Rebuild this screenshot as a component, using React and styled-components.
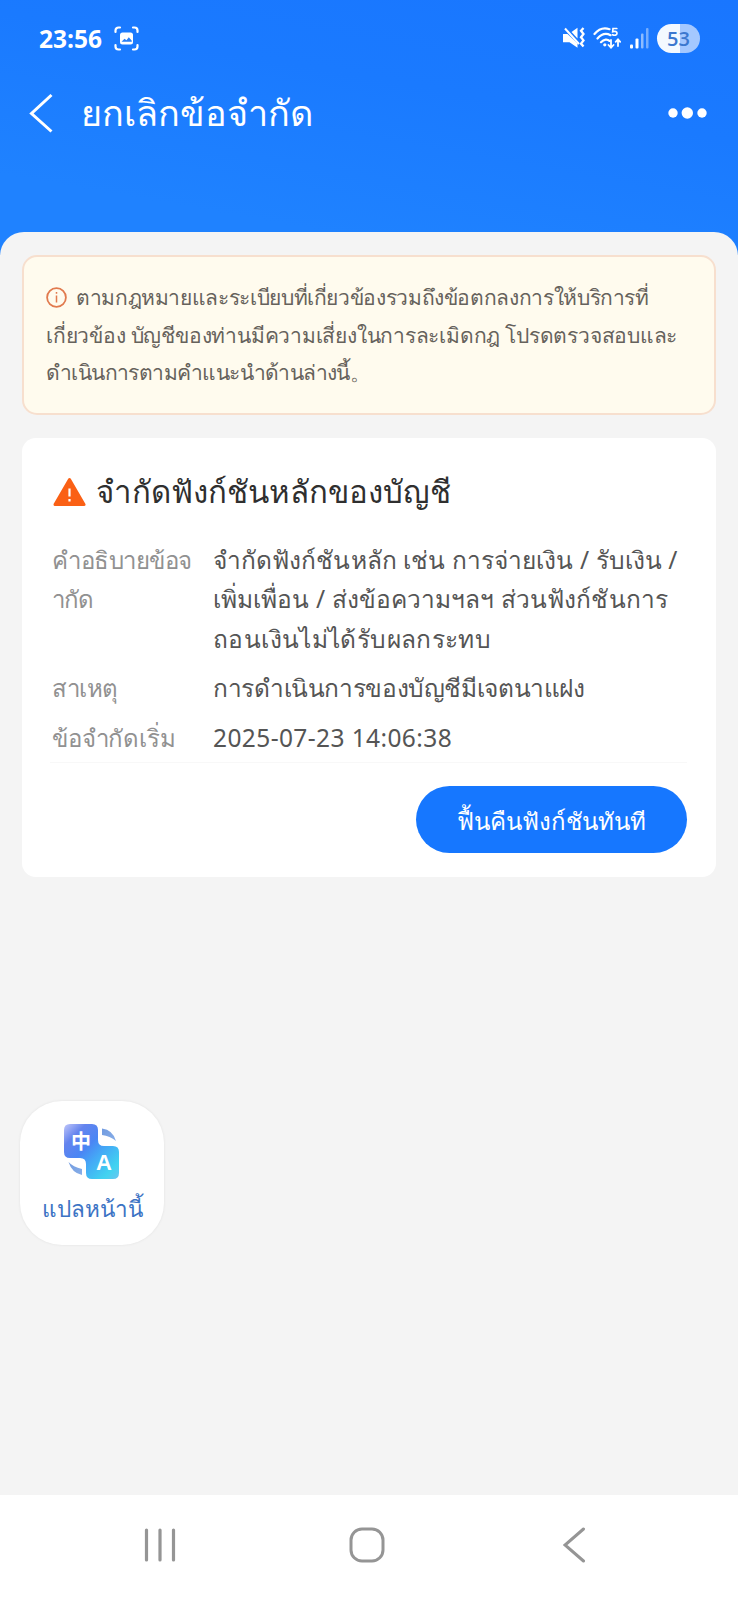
import React from "react";
import styled, { createGlobalStyle } from "styled-components";

const Global = createGlobalStyle`
  * { box-sizing: border-box; }
  body { margin: 0; background: #f4f4f4; font-family: "Noto Sans", "Open Sans", sans-serif; }
`;

const Screen = styled.div`
  width: 738px;
  height: 1600px;
  display: flex;
  flex-direction: column;
  overflow: hidden;
  background: linear-gradient(190deg, #1976ff 0, #1a7aff 140px, #1f82ff 300px);
`;

const Line = styled.span`
  display: block;
  white-space: nowrap;
  letter-spacing: ${(p) => p.$track || 0}px;
`;

const StatusBar = styled.div`
  display: flex;
  align-items: center;
  justify-content: space-between;
  height: 76px;
  padding: 0 38px 0 39px;
  color: #fff;
`;
const StatusGroup = styled.div`
  display: flex;
  align-items: center;
  gap: ${(p) => p.$gap}px;
`;
const Clock = styled.span`
  font: 700 24.5px "Open Sans", sans-serif;
`;
const Battery = styled.span`
  width: 43px;
  height: 29px;
  border-radius: 15px;
  background: linear-gradient(90deg, #f4f9ff 0 23px, #a4c8ff 23px);
  color: #3c78cf;
  font: 600 20px/29px "Open Sans", sans-serif;
  text-align: center;
`;

const TitleBar = styled.header`
  display: flex;
  align-items: center;
  height: 156px;
  padding: 0 31px 82px 29px;
  color: #fff;
`;
const Title = styled.h1`
  flex: 1;
  margin: 0 0 0 28px;
  font-size: 36px;
  font-weight: 400;
  line-height: 60px;
`;

const Sheet = styled.main`
  flex: 1;
  display: flex;
  flex-direction: column;
  align-items: flex-start;
  padding: 23px 22px 0;
  border-radius: 24px 24px 0 0;
  background: #f4f4f4;
`;
const Notice = styled.section`
  width: 694px;
  height: 160px;
  padding: 22px 22px;
  border: 2px solid #f7dfce;
  border-radius: 15px;
  background: #fffbee;
  color: #66625c;
  font-size: 21px;
  line-height: 37.5px;
`;
const NoticeLead = styled.div`
  display: flex;
  align-items: center;
  gap: 9px;
`;

const Card = styled.section`
  width: 694px;
  height: 439px;
  margin-top: 23px;
  padding: 29px 29px 24px 30px;
  border-radius: 14px;
  background: #fff;
  display: flex;
  flex-direction: column;
`;
const CardHead = styled.div`
  display: flex;
  align-items: center;
  gap: 10px;
  height: 50px;
  color: #2f2f2f;
  font-size: 31.2px;
`;
const Details = styled.dl`
  display: grid;
  grid-template-columns: 161px 1fr;
  row-gap: 10.5px;
  margin: 23px 0 0;
  line-height: 39.3px;
`;
const Label = styled.dt`
  color: #919191;
  font-size: 24px;
`;
const Value = styled.dd`
  margin: 0;
  color: #555;
  font-size: 24.5px;
`;
const CardFoot = styled.div`
  display: flex;
  justify-content: flex-end;
  margin: auto 0 0 -2px;
  padding-top: 23px;
  border-top: 1px solid #f8f8f8;
`;
const Action = styled.button`
  display: flex;
  align-items: center;
  justify-content: center;
  width: 271px;
  height: 67px;
  padding: 3px 0 0;
  border: 0;
  border-radius: 34px;
  background: #1677ff;
  color: #fff;
  font: 500 24px "Noto Sans", sans-serif;
`;

const Translate = styled.button`
  display: flex;
  flex-direction: column;
  align-items: center;
  gap: 11px;
  width: 144px;
  height: 144px;
  margin: 224px 0 0 -2px;
  padding: 23px 0 0;
  border: 0;
  border-radius: 42px;
  background: #fff;
  box-shadow: 0 0 3px rgba(0, 0, 0, 0.08);
  color: #3c73c4;
  font: 400 22.5px "Noto Sans", sans-serif;
`;

const NavBar = styled.nav`
  display: flex;
  align-items: center;
  justify-content: space-between;
  height: 105px;
  padding: 0 152px 5px 144px;
  background: #fff;
`;
const HomeKey = styled.span`
  display: flex;
  margin-right: 5px;
`;

const CaptureIcon = () => (
  <svg width="25" height="25" viewBox="0 0 25 25" fill="none" stroke="#fff" strokeWidth="2.2" strokeLinecap="round">
    <path d="M1.500 6V4.500a3 3 0 0 1 3-3H6M19 1.500h1.500a3 3 0 0 1 3 3V6M23.500 19v1.500a3 3 0 0 1-3 3H19M6 23.500H4.500a3 3 0 0 1-3-3V19" />
    <rect x="6" y="6.500" width="13" height="12" rx="2.500" fill="#fff" stroke="none" />
    <path d="M7.500 15.800l3-3 2 1.500 2.300-3 3 3.500v1z" fill="#2a7ff5" stroke="none" />
  </svg>
);
const MuteIcon = () => (
  <svg width="22" height="22" viewBox="0 0 22 22" fill="#fff" stroke="#fff">
    <path d="M8.500 5L14.500.8V11.500z" stroke="none" />
    <path d="M0 7h4.500L14.500 16.500v4.300L6.500 15.300H0z" stroke="none" />
    <path d="M2 1.500L16 17" strokeWidth="2" />
    <path d="M20.500 1l-2.500 2.800 2.500 3.200-2.500 3.200 2.500 3.200-2.500 3.200 2.500 2.900" strokeWidth="2.300" fill="none" />
  </svg>
);
const WifiIcon = () => (
  <svg width="28" height="22" viewBox="0 0 28 22" fill="none" stroke="#fff" strokeLinecap="round">
    <path d="M1.500 7C6 1.500 12 .7 16.500 2.200M4.500 11.500C8.500 7 13.500 6 17.500 8.200M8 15.200c3-3.200 6.500-3.200 8.500-1.300" strokeWidth="2.200" />
    <circle cx="11.800" cy="17.800" r="1.600" fill="#fff" stroke="none" />
    <path d="M23.800 1.500h-3.800l-.3 3.300c2.800-1 4.300 0 4.300 1.500 0 2-2.500 2.400-4.500 1.400" strokeWidth="1.700" />
    <path d="M18 13v7.500m-2.500-2.500l2.500 2.700 2.500-2.700M25 19v-6.500m-2.300 2.300L25 12.300l2.200 2.500" strokeWidth="1.800" />
  </svg>
);
const SignalIcon = () => (
  <svg width="19" height="21" viewBox="0 0 19 21" fill="#fff">
    <rect x="0" y="16.500" width="3" height="4" rx="1" />
    <rect x="5.500" y="10.500" width="3" height="10" rx="1" />
    <rect x="11" y="5.500" width="2.500" height="15" rx="1" opacity=".5" />
    <rect x="16" y="0" width="2.500" height="20.500" rx="1" opacity=".4" />
  </svg>
);
const BackIcon = () => (
  <svg width="24" height="40" viewBox="0 0 24 40" fill="none" stroke="#fff" strokeWidth="3">
    <path d="M22.500 2L2.500 20.500 22.500 38.500" />
  </svg>
);
const MoreIcon = () => (
  <svg width="40" height="14" viewBox="0 0 40 14" fill="#fff">
    <circle cx="6" cy="7" r="4.700" />
    <circle cx="20.300" cy="7" r="5.700" />
    <circle cx="35" cy="7" r="4.700" />
  </svg>
);
const InfoIcon = () => (
  <svg width="21" height="21" viewBox="0 0 21 21" fill="none" stroke="#e17a4e">
    <circle cx="10.500" cy="10.500" r="9.400" strokeWidth="1.800" />
    <path d="M10.500 8.500v7M10.500 5v1.800" strokeWidth="1.500" />
  </svg>
);
const WarnIcon = () => (
  <svg width="34" height="30" viewBox="0 0 34 30">
    <path d="M17.500 2.500L32 27.500H3z" fill="#fa6015" stroke="#fa6015" strokeWidth="3" strokeLinejoin="round" />
    <path d="M17.500 11.500v8M17.500 22v2.500" stroke="#fff" strokeWidth="2.200" />
  </svg>
);
const TranslateIcon = () => (
  <svg width="56" height="56" viewBox="0 0 56 56" fill="none">
    <defs>
      <linearGradient id="tiles" x1="0" y1="0" x2="1" y2="1">
        <stop offset="0" stopColor="#c0c6fa" />
        <stop offset=".2" stopColor="#6484ee" />
        <stop offset=".42" stopColor="#4a86f4" />
        <stop offset=".6" stopColor="#44aaf6" />
        <stop offset=".85" stopColor="#41d3f0" />
        <stop offset="1" stopColor="#6cc4f0" />
      </linearGradient>
      <linearGradient id="arcs" x1="0" y1="0" x2="1" y2="1">
        <stop offset="0" stopColor="#5684d8" />
        <stop offset="1" stopColor="#a4c6f0" />
      </linearGradient>
    </defs>
    <path d="M6 0h22q6 0 6 6v10q0 6 6 6h9q6 0 6 6v21q0 6-6 6H28q-6 0-6-6v-9q0-6-6-6H6q-6 0-6-6V6q0-6 6-6z" fill="url(#tiles)" />
    <path d="M38 4.500Q49 6 52 17q-6-5-14-6zM4.500 38Q9 43 18 45v6Q8 49 4.500 38z" fill="url(#arcs)" />
    <text x="17" y="24.500" fill="#fff" fontFamily="'Noto Sans CJK SC', sans-serif" fontWeight="700" fontSize="20" textAnchor="middle">中</text>
    <text x="40" y="46" fill="#fff" fontFamily="'Liberation Sans', sans-serif" fontWeight="700" fontSize="22" textAnchor="middle">A</text>
  </svg>
);
const RecentsIcon = () => (
  <svg width="32" height="34" viewBox="0 0 32 34" stroke="#959595" strokeWidth="3.200" strokeLinecap="round">
    <path d="M2.500 2v30M16 2v30M29.500 2v30" />
  </svg>
);
const HomeIcon = () => (
  <svg width="36" height="36" viewBox="0 0 36 36" fill="none" stroke="#959595" strokeWidth="3">
    <rect x="2" y="2" width="32" height="32" rx="11" />
  </svg>
);
const NavBackIcon = () => (
  <svg width="23" height="36" viewBox="0 0 23 36" fill="none" stroke="#959595" strokeWidth="3" strokeLinecap="round">
    <path d="M20.500 2L2 18l18.500 16" />
  </svg>
);

export default function App() {
  return (
    <>
      <Global />
      <Screen>
        <StatusBar>
          <StatusGroup $gap={12}><Clock>23:56</Clock><CaptureIcon /></StatusGroup>
          <StatusGroup $gap={8.5}><MuteIcon /><WifiIcon /><SignalIcon /><Battery>53</Battery></StatusGroup>
        </StatusBar>
        <TitleBar>
          <BackIcon />
          <Title><Line>ยกเลิกข้อจำกัด</Line></Title>
          <MoreIcon />
        </TitleBar>
        <Sheet>
          <Notice>
            <NoticeLead>
              <InfoIcon />
              <Line $track={-0.36}>ตามกฎหมายและระเบียบที่เกี่ยวข้องรวมถึงข้อตกลงการให้บริการที่</Line>
            </NoticeLead>
            <Line $track={-0.22}>เกี่ยวข้อง บัญชีของท่านมีความเสี่ยงในการละเมิดกฎ โปรดตรวจสอบและ</Line>
            <Line $track={-0.6}>ดำเนินการตามคำแนะนำด้านล่างนี้。</Line>
          </Notice>
          <Card>
            <CardHead><WarnIcon /><Line>จำกัดฟังก์ชันหลักของบัญชี</Line></CardHead>
            <Details>
              <Label>
                <Line $track={-0.5}>คำอธิบายข้อจ</Line>
                <Line $track={-0.8}>ากัด</Line>
              </Label>
              <Value>
                <Line $track={0.07}>จำกัดฟังก์ชันหลัก เช่น การจ่ายเงิน / รับเงิน /</Line>
                <Line $track={0.08}>เพิ่มเพื่อน / ส่งข้อความฯลฯ ส่วนฟังก์ชันการ</Line>
                <Line $track={0.38}>ถอนเงินไม่ได้รับผลกระทบ</Line>
              </Value>
              <Label><Line $track={-0.4}>สาเหตุ</Line></Label>
              <Value><Line $track={-0.37}>การดำเนินการของบัญชีมีเจตนาแฝง</Line></Value>
              <Label><Line $track={-0.2}>ข้อจำกัดเริ่ม</Line></Label>
              <Value><Line $track={0.4}>2025-07-23 14:06:38</Line></Value>
            </Details>
            <CardFoot><Action><Line>ฟื้นคืนฟังก์ชันทันที</Line></Action></CardFoot>
          </Card>
          <Translate><TranslateIcon /><Line>แปลหน้านี้</Line></Translate>
        </Sheet>
        <NavBar><RecentsIcon /><HomeKey><HomeIcon /></HomeKey><NavBackIcon /></NavBar>
      </Screen>
    </>
  );
}
